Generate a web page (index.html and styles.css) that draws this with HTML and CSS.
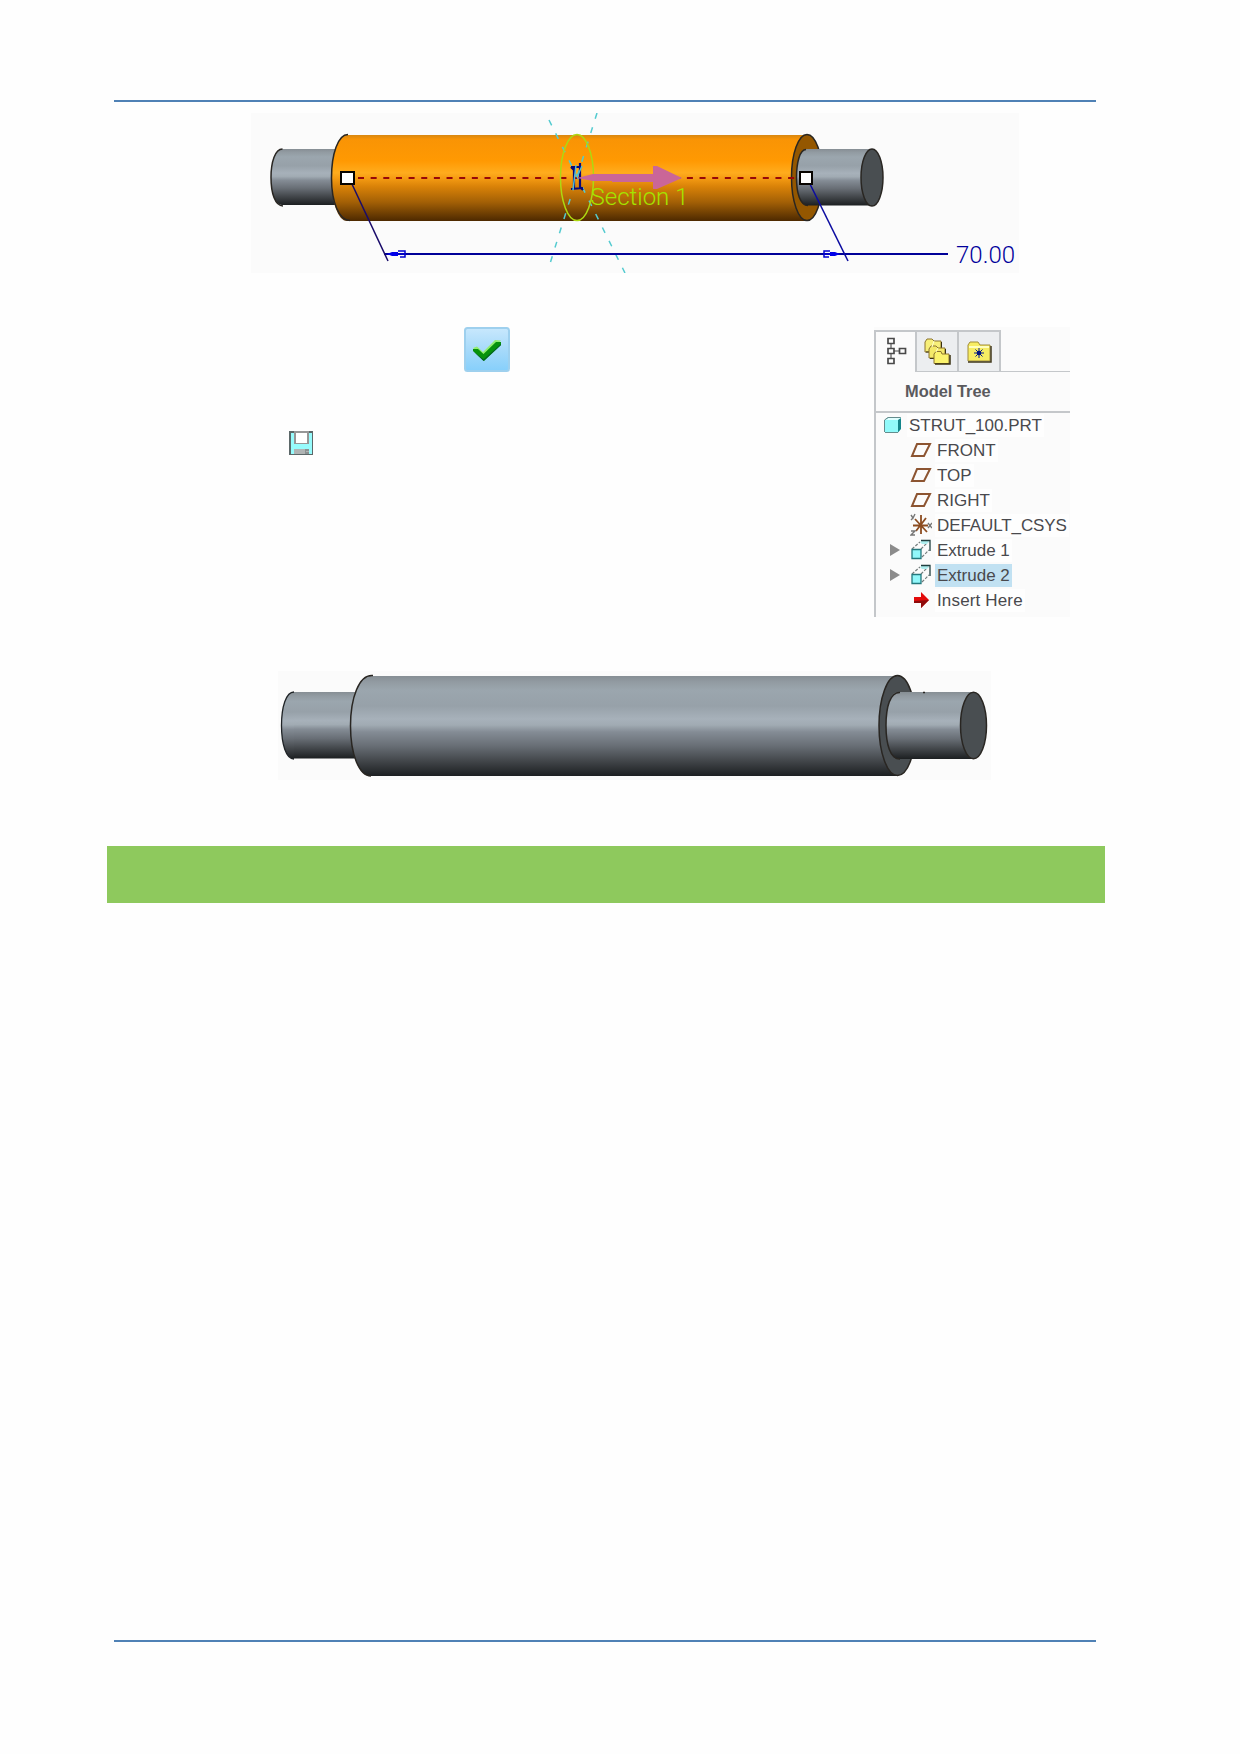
FILE: index.html
```html
<!DOCTYPE html>
<html lang="en">
<head>
<meta charset="utf-8">
<title>Strut 100</title>
<link rel="stylesheet" href="styles.css">
</head>
<body>
<main class="page">
  <hr class="rule">

  <svg class="preview" viewBox="251 113 768 160" width="768" height="160">
    <defs>
      <linearGradient id="steel" x1="0" y1="0" x2="0" y2="1">
        <stop offset="0" stop-color="#868e94"/><stop offset=".06" stop-color="#929ba2"/>
        <stop offset=".14" stop-color="#9ba6ae"/><stop offset=".3" stop-color="#97a1a9"/>
        <stop offset=".43" stop-color="#a7b1ba"/><stop offset=".49" stop-color="#a1abb3"/>
        <stop offset=".56" stop-color="#848c95"/><stop offset=".7" stop-color="#686e75"/>
        <stop offset=".85" stop-color="#42464a"/><stop offset="1" stop-color="#1c1f21"/>
      </linearGradient>
      <linearGradient id="orange" x1="0" y1="0" x2="0" y2="1">
        <stop offset="0" stop-color="#d88710"/><stop offset=".05" stop-color="#f99405"/>
        <stop offset=".3" stop-color="#ff9902"/><stop offset=".44" stop-color="#ffac1d"/>
        <stop offset=".5" stop-color="#f69c13"/><stop offset=".6" stop-color="#d98208"/>
        <stop offset=".78" stop-color="#a36006"/><stop offset="1" stop-color="#4d2900"/>
      </linearGradient>
    </defs>
    <path d="M345 149H282C275 149 271 162 271 177.500S275 205 282 205H345Z" fill="url(#steel)"/>
    <path d="M282.500 149C275 149 271 162 271 177.500S275 206 283 206" class="edge"/>
    <path d="M807 135H347C338 135 331.500 154 331.500 178S338 221 347 221H807Z" fill="url(#orange)"/>
    <path d="M348 134.500C338 134.500 331.500 154 331.500 178S339 220.500 350 220.500" class="edge"/>
    <ellipse cx="807" cy="177.500" rx="15.500" ry="43" fill="#945700" class="edge-ring"/>
    <path d="M872 149H807C800 149 796.500 162 796.500 177.500S800 205.500 807 205.500H872Z" fill="url(#steel)"/>
    <path d="M806 149.500C800 149.500 796.500 162 796.500 177.500S800 205.500 808 205.500" class="edge"/>
    <ellipse cx="872" cy="177.500" rx="11" ry="28.500" fill="#494e51" class="edge-ring"/>

    <path d="M358 178H795" stroke="#970808" stroke-width="2" stroke-dasharray="6 6.650"/>
    <path d="M549 120L625 273M597 113L548 270" class="axis"/>
    <ellipse cx="577" cy="177.500" rx="16.500" ry="43" fill="none" stroke="#add911" stroke-width="1.500"/>
    <path d="M571 167H581M574 167V189M580 163V188M571 189L583 188M571 167L574 170M580 187L583 190" fill="none" stroke="#080877" stroke-width="2.200"/>
    <path d="M576 165L573 190M582 166L577 177" stroke="#54bdd2" stroke-width="1.500"/>
    <path d="M577 178L593 174H653V166H657L682 178L657 189H653V182H612V181H593Z" fill="#ca6698"/>
    <text x="590.500" y="205" class="cad-text" fill="#a4e400" textLength="98">Section 1</text>

    <path d="M384 254H948" stroke="#000098" stroke-width="2"/>
    <path d="M351 182L388 261" stroke="#190b6a" stroke-width="1.500"/>
    <path d="M809 182L848 261" stroke="#0b0ba0" stroke-width="1.500"/>
    <path d="M387 254L392 252H398V256H392ZM840 254L835 252H830V256H835Z" fill="#0000e8"/>
    <path d="M398 251H405V257H400M398 254H405M830 251H824V257H829M824 254H830" fill="none" stroke="#0000cf" stroke-width="1.500"/>
    <path d="M341 172H354V184H341ZM800 172H812V184H800Z" fill="#fff" stroke="#080400" stroke-width="2"/>
    <text x="956" y="262.500" class="cad-text" fill="#00009b" textLength="59">70.00</text>
  </svg>

  <section class="steps">
    <div class="actions">
      <svg class="accept" viewBox="0 0 46 45" width="46" height="45">
        <defs><linearGradient id="glass" x1="0" y1="0" x2="0" y2="1"><stop offset="0" stop-color="#c8e8fd"/><stop offset=".5" stop-color="#a7dafa"/><stop offset="1" stop-color="#86cffb"/></linearGradient></defs>
        <rect x="1" y="1" width="44" height="43" rx="2.500" fill="url(#glass)" stroke="#9ed0ee" stroke-width="2"/>
        <path d="M9 21L13 19.500L19 25L31 13L37 13.500L20 31Z" fill="#91ed70"/>
        <path d="M9 22H14L19.500 27L32 15H37V18L20 34L9 24Z" fill="#06920b"/>
        <path d="M9 24L19.500 32.500L37 17V18L19.500 34Z" fill="#035d25"/>
      </svg>
      <svg class="save" viewBox="0 0 24 24" width="24" height="24">
        <path d="M0 0H24V24H0Z" fill="#5c6869"/>
        <path d="M2 2H23V23H2Z" fill="#97fbfc"/>
        <path d="M5 0H20V13H5Z" fill="#969696"/><path d="M7 2H18V12H7Z" fill="#fff"/>
        <path d="M5 18H20V23H5Z" fill="#b0b4b4"/><path d="M16 18H20V20H17V21H20V23H16Z" fill="#8b9191"/>
      </svg>
    </div>

    <aside class="model">
      <div class="tabs">
        <div class="tab tab-active">
          <svg viewBox="0 0 20 28" width="20" height="28" fill="#fbfbfb" stroke="#494949" stroke-width="1.700"><path d="M4 5V22M4 14H13" stroke="#888" fill="none"/><path d="M1 1.500H7V6.500H1ZM1 11.500H7V16.500H1ZM1 21.500H7V26.500H1ZM12.500 11.500H18.500V16.500H12.500Z"/></svg>
        </div>
        <div class="tab tab-folders">
          <svg viewBox="0 0 27 27" width="27" height="27" stroke="#8c7431" stroke-width="1"><path d="M1 4L3 1H8L10 3H17V14H1Z" fill="#f7ef79"/><path d="M17.500 4V14H2" fill="none" stroke="#393111"/><path d="M5 11L7 8H12L14 10H21V20H5Z" fill="#f4e969"/><path d="M21.500 11V20.500H6" fill="none" stroke="#393111"/><path d="M10 16L12 13.500H17L18 16H25V25.500H10Z" fill="#fbf36d"/><path d="M26 17V26H11" fill="none" stroke="#393111" stroke-width="1.500"/><path d="M10 3L8 9M14 10L12 14" stroke="#ffffca"/></svg>
        </div>
        <div class="tab tab-favorites">
          <svg viewBox="0 0 25 22" width="25" height="22"><path d="M1 20V4L3 1H11L13 4H23V20Z" fill="#f7ed63" stroke="#a18d3b"/><path d="M2 6H22" stroke="#ffffbd" stroke-width="2"/><path d="M1 21H24V5" fill="none" stroke="#40391b" stroke-width="1.500"/><path d="M7 12H17M12 7V17M8.500 8.500L15.500 15.500M15.500 8.500L8.500 15.500" stroke="#092086" stroke-width="1"/><circle cx="12" cy="12" r="2.300" fill="#001481"/></svg>
        </div>
        <div class="tab-rest"></div>
      </div>
      <h2 class="model-title"><span>Model Tree</span></h2>
      <ul class="tree">
        <li class="root"><svg class="part" viewBox="0 0 18 16" width="18" height="16"><path d="M1 3L4 .5H17V12L14 15.500H1Z" fill="#13858a"/><path d="M1 3L4 1H17L14 3Z" fill="#dfffff"/><path d="M1 3H14V15H1Z" fill="#91fafa"/><path d="M.5 15V3L4 .5H16.500M1 15.500H14" fill="none" stroke="#658c8d"/></svg><span class="label root-label">STRUT_100.PRT</span></li>
        <li><span class="twist"></span><svg class="icon" viewBox="0 0 22 20" width="22" height="20"><path d="M7 4H20L14 16H2Z" class="plane"/></svg><span class="label">FRONT</span></li>
        <li><span class="twist"></span><svg class="icon" viewBox="0 0 22 20" width="22" height="20"><path d="M7 4H20L14 16H2Z" class="plane"/></svg><span class="label">TOP</span></li>
        <li><span class="twist"></span><svg class="icon" viewBox="0 0 22 20" width="22" height="20"><path d="M7 4H20L14 16H2Z" class="plane"/></svg><span class="label">RIGHT</span></li>
        <li><span class="twist"></span><svg class="icon" viewBox="0 0 22 24" width="22" height="24"><path d="M3 12.500H18M11 2V21M5 6L17 19M16 5L6 18" stroke="#8c4c20" stroke-width="1.800"/><path d="M1 2L3 5L5 1M3 5L1 7M1 18H5L1 22H5M18 10L22 15M22 10L18 15" fill="none" stroke="#777" stroke-width="1.400"/></svg><span class="label csys">DEFAULT_CSYS</span></li>
        <li><span class="twist arrow"></span><svg class="icon" viewBox="0 0 22 22" width="22" height="22"><g id="extrude"><path d="M2 10L10 3M11 10L18 3M12 18L19 11" stroke="#747d7d" stroke-width="1.200" stroke-dasharray="3 1.500"/><path d="M10 3L14 1H20L17 5H12Z" fill="#aeeeee"/><path d="M11 1.500H20V12" fill="none" stroke="#203f3f" stroke-width="1.300"/><path d="M2 10.500H11V19.500H2Z" fill="#91f7fa" stroke="#24787d" stroke-width="1.300"/></g></svg><span class="label">Extrude 1</span></li>
        <li><span class="twist arrow"></span><svg class="icon" viewBox="0 0 22 22" width="22" height="22"><use href="#extrude"/></svg><span class="label selected">Extrude 2</span></li>
        <li><span class="twist"></span><svg class="icon" viewBox="0 0 22 20" width="22" height="20"><path d="M4 7H11V2L19 10L11 18V13H4Z" fill="#e30b0b"/><path d="M4 11L19 10L11 18V13H4Z" fill="#8e0b0b"/></svg><span class="label insert">Insert Here</span></li>
      </ul>
    </aside>
  </section>

  <svg class="result" viewBox="278 671 713 109" width="713" height="109">
    <rect x="293" y="692" width="70" height="66.500" fill="url(#steel)"/>
    <path d="M294 692C286 692 281.500 707 281.500 725.500S286 759 294 759" fill="url(#steel)" stroke="#202427" stroke-width="1.300"/>
    <path d="M898 676H370C359 676 350.500 698 350.500 726S359 776 370 776H898Z" fill="url(#steel)"/>
    <path d="M373 675.500C359 674 350.500 698 350.500 726S359 776 371 776" class="edge"/>
    <ellipse cx="897.500" cy="725.500" rx="18.500" ry="50" fill="#494e51" class="edge-ring"/>
    <path d="M973 692H898C890 692 886 707 886 725.500S890 759 898 759H973Z" fill="url(#steel)"/>
    <path d="M900 692.500C890 692 886 707 886 725.500S890 759 900 759M923 692.500H925" class="edge"/>
    <ellipse cx="973.500" cy="725.500" rx="13" ry="33.300" fill="#494e51" class="edge-ring"/>
  </svg>

  <div class="banner"></div>
  <hr class="rule footer-rule">
</main>
</body>
</html>
```
FILE: styles.css
```css
* { box-sizing: border-box; }
body { margin: 0; background: #fefefe; font-family: "Liberation Sans", Arial, sans-serif; }
svg { display: block; flex: none; }
.page { width: 1240px; height: 1754px; display: flex; flex-direction: column; padding: 100px 144px 112px 114px; }
.rule { width: 982px; height: 2px; margin: 0; border: 0; background: #4f81b5; flex: none; }
.preview { margin: 11px 0 0 137px; background: #fbfbfb; }
.edge { fill: none; stroke: #292622; stroke-width: 1.500; }
.edge-ring { stroke: #292622; stroke-width: 1.500; }
.axis { fill: none; stroke: #54cbd0; stroke-width: 1.500; stroke-dasharray: 6 9; }
.cad-text { font-family: Roboto, "Liberation Sans", sans-serif; font-size: 24px; font-weight: 300; }

.steps { display: flex; justify-content: space-between; width: 956px; height: 290px; margin-top: 54px; }
.actions { display: flex; flex-direction: column; gap: 59px; padding-left: 175px; }
.accept { margin-left: 175px; }

.model { width: 196px; padding-top: 3px; background: #fbfbfb; color: #49494d; }
.tabs { display: flex; height: 42px; }
.tab { display: flex; align-items: center; justify-content: center; border: 2px solid #c4c7ca; border-left-width: 0; background: #eceef0; }
.tab-active { width: 43px; border-left-width: 2px; border-bottom: 0; background: #fbfbfb; }
.tab-active svg { margin: 0 0 2px 2px; }
.tab-folders { width: 42px; }
.tab-favorites { width: 42px; }
.tab-rest { flex: 1; border-bottom: 1px solid #c4c7ca; }
.tab-folders, .tab-favorites { border-bottom-width: 1px; }
.model-title { display: flex; align-items: center; height: 41px; margin: 0; padding-left: 29px; border-left: 2px solid #c4c7ca; border-bottom: 2px solid #c4c7ca; font-size: 16.400px; font-weight: 700; }
.model-title span { opacity: .9; }
.tree { height: 204px; margin: 0; padding: 0; border-left: 2px solid #c4c7ca; list-style: none; font-size: 17px; white-space: nowrap; }
.tree li { display: flex; align-items: center; height: 25px; }
.tree .root { height: 24.500px; padding-left: 8px; }
.root-label { margin-left: 5px; }
.twist { width: 34px; flex: none; }
.arrow::before { content: ""; display: block; margin-left: 14px; border-left: 10px solid #8b8b8b; border-top: 6px solid transparent; border-bottom: 6px solid transparent; width: 0; }
.icon { margin-right: 3px; }
.plane { fill: none; stroke: #8c5431; stroke-width: 2; }
.label { height: 23px; padding: 0 2px; line-height: 23px; background: #fefefe; }
.csys { letter-spacing: -0.1px; }
.insert { letter-spacing: 0.15px; }
.selected { background: #c1e1f2; }

.result { margin: 54px 0 0 164px; background: #fbfbfb; }
.banner { width: 998px; height: 57px; margin: 66px 0 0 -7px; background: #8ec95d; flex: none; }
.footer-rule { margin-top: auto; }
```
